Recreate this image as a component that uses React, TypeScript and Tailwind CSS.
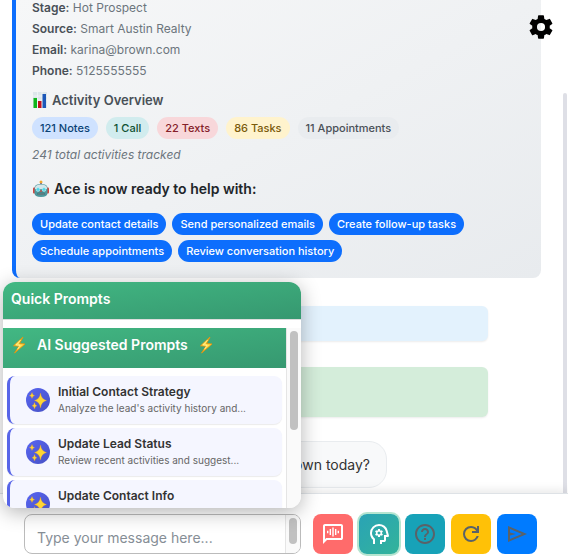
import React from 'react';
import { IoSettingsSharp } from 'react-icons/io5';
import { MdHelpOutline } from 'react-icons/md';

const details = [
  { label: 'Stage', value: 'Hot Prospect' },
  { label: 'Source', value: 'Smart Austin Realty' },
  { label: 'Email', value: 'karina@brown.com' },
  { label: 'Phone', value: '5125555555' },
];

const activities = [
  { text: '121 Notes', color: 'bg-[#cfe2ff] text-[#0a4275]' },
  { text: '1 Call', color: 'bg-[#d1ecee] text-[#0f5132]' },
  { text: '22 Texts', color: 'bg-[#f8d7da] text-[#842029]' },
  { text: '86 Tasks', color: 'bg-[#fff3cd] text-[#7a5a0a]' },
  { text: '11 Appointments', color: 'bg-[#e9ecef] text-[#495057]' },
];

const abilities = [
  'Update contact details',
  'Send personalized emails',
  'Create follow-up tasks',
  'Schedule appointments',
  'Review conversation history',
];

const prompts = [
  { title: 'Initial Contact Strategy', text: "Analyze the lead's activity history and..." },
  { title: 'Update Lead Status', text: 'Review recent activities and suggest...' },
  { title: 'Update Contact Info', text: '' },
];

function ChartIcon() {
  return (
    <svg viewBox="0 0 16 16" className="w-4 h-4 shrink-0" aria-hidden="true">
      <rect x="1" width="14" height="16" fill="#dde6ea" />
      <path d="M1 4h14M1 8h14M1 12h14M5.5 0v16M10 0v16" stroke="#f6fafb" strokeWidth="0.6" />
      <rect x="1.500" y="6" width="3.500" height="10" fill="#10b51c" />
      <rect x="6" y="9" width="3.500" height="7" fill="#c4121f" />
      <rect x="10.500" y="2" width="3.500" height="14" fill="#1c57b8" />
    </svg>
  );
}

function RobotIcon() {
  return (
    <svg viewBox="0 0 18 18" className="w-[18px] h-[18px] shrink-0" aria-hidden="true">
      <rect x="1" y="7.500" width="3" height="6" rx="1" fill="#d3453d" />
      <rect x="14" y="7.500" width="3" height="6" rx="1" fill="#d3453d" />
      <path d="M8 2.500h2V5H8z" fill="#5a5fb8" />
      <circle cx="9" cy="2" r="1.500" fill="#f0a92e" />
      <path d="M2.500 8q0-4 6.500-4t6.500 4v5q0 4-6.500 4t-6.500-4z" fill="#4d979c" />
      <path d="M3 8q0-3.500 6-3.500T15 8v1H3z" fill="#d5e6e9" />
      <circle cx="6" cy="9.500" r="1.900" fill="#4fd6e6" stroke="#d2eff2" strokeWidth="0.6" />
      <circle cx="12" cy="9.500" r="1.900" fill="#4fd6e6" stroke="#d2eff2" strokeWidth="0.6" />
      <path d="M9 9.500l1.200 2.200H7.800z" fill="#d3453d" />
      <rect x="5.500" y="12.800" width="7" height="2.200" rx="1" fill="#35585c" />
      <path d="M7 13v2M9 13v2M11 13v2" stroke="#b9d4d6" strokeWidth="0.6" />
    </svg>
  );
}

function BoltIcon() {
  return (
    <svg viewBox="0 0 16 18" className="w-4 h-[18px] shrink-0" aria-hidden="true">
      <path
        d="M12 1L2.500 9.800l5.500.4L3.500 17 14 8l-5.500-.4z"
        fill="#ffe04f"
        stroke="#e8930c"
        strokeWidth="0.9"
        strokeLinejoin="round"
      />
      <path d="M9.500 4L5 8.800l4 .5L6.500 13" fill="none" stroke="#fff3a6" strokeWidth="0.7" />
    </svg>
  );
}

function SparklesIcon() {
  return (
    <svg viewBox="0 0 24 24" className="w-6 h-6" fill="#ffd633" stroke="#f0a020" strokeWidth="0.3" aria-hidden="true">
      <path d="M14.500 5q.8 6.400 6 7.500-5.200 1.100-6 7.500-.8-6.400-6-7.500 5.200-1.100 6-7.500z" />
      <path d="M6 4.500q.4 2.600 2.600 3Q6.400 8 6 10.500 5.600 8 3.400 7.500q2.200-.4 2.600-3z" />
      <path d="M8.500 14.500q.4 2.800 2.500 3.200-2.100.4-2.500 3.200-.4-2.800-2.500-3.200 2.100-.4 2.500-3.200z" />
    </svg>
  );
}

function VoiceChatIcon() {
  return (
    <svg viewBox="0 -960 960 960" className="w-6 h-6" fill="currentColor" aria-hidden="true">
      <path d="M80-80v-720q0-33 23.500-56.500T160-880h640q33 0 56.500 23.500T880-800v480q0 33-23.500 56.500T800-240H240L80-80Zm126-240h594v-480H160v525l46-45Z" />
      <path d="M240-610h55v100h-55zM345-680h55v240h-55zM452-740h56v360h-56zM560-680h55v240h-55zM665-610h55v100h-55z" />
    </svg>
  );
}

function HeadIcon() {
  return (
    <svg viewBox="0 -960 960 960" className="w-6 h-6" fill="currentColor" aria-hidden="true">
      <path d="M240-80v-172q-57-52-88.500-121.500T120-520q0-150 105-255t255-105q125 0 221.500 73.500T827-615l52 205q5 19-7 34.500T840-360h-80v120q0 33-23.500 56.500T680-160h-80v80h-80v-160h160v-200h108l-38-155q-23-91-98-148t-172-57q-116 0-198 81t-82 197q0 60 24.500 114t69.500 96l26 24v208h-80Z" />
      <path d="M440-360h80l6-50q8-3 14.500-7t11.500-9l46 20 40-68-40-30q2-8 2-16t-2-16l40-30-40-68-46 20q-5-5-11.500-9t-14.500-7l-6-50h-80l-6 50q-8 3-14.500 7t-11.500 9l-46-20-40 68 40 30q-2 8-2 16t2 16l-40 30 40 68 46-20q5 5 11.500 9t14.500 7l6 50Zm40-100q-25 0-42.500-17.500T420-520q0-25 17.500-42.500T480-580q25 0 42.500 17.500T540-520q0 25-17.500 42.500T480-460Z" />
    </svg>
  );
}

function RefreshIcon() {
  return (
    <svg viewBox="0 -960 960 960" className="w-6 h-6" fill="currentColor" aria-hidden="true">
      <path d="M480-160q-134 0-227-93t-93-227q0-134 93-227t227-93q69 0 132 28.500T720-690v-110h80v280H520v-80h168q-32-56-87.500-88T480-720q-100 0-170 70t-70 170q0 100 70 170t170 70q77 0 139-44t87-116h84q-28 106-114 173t-196 67Z" />
    </svg>
  );
}

function SendIcon() {
  return (
    <svg viewBox="0 -960 960 960" className="w-6 h-6" fill="currentColor" aria-hidden="true">
      <path d="M120-160v-640l760 320-760 320Zm80-120 474-200-474-200v140l240 60-240 60v140Z" />
    </svg>
  );
}

function ContactCard() {
  return (
    <section className="mr-[22px] px-4 pb-4 rounded-b-lg border-l-4 border-[#0d6efd] bg-linear-to-br from-[#f6f7f8] to-[#e8ebee]">
      <div className="space-y-[5px] text-xs leading-4 text-[#6c757d]">
        {details.map(item => (
          <p key={item.label}>
            <strong className="font-semibold text-[#495057]">{item.label}:</strong> {item.value}
          </p>
        ))}
      </div>

      <h3 className="mt-[13px] flex items-center gap-1 text-[13px] leading-4 font-semibold text-[#495057]">
        <ChartIcon />
        Activity Overview
      </h3>
      <div className="mt-[9px] flex flex-wrap gap-2">
        {activities.map(item => (
          <span
            key={item.text}
            className={`px-2 rounded-full text-[11px] leading-[22px] font-medium ${item.color}`}
          >
            {item.text}
          </span>
        ))}
      </div>
      <p className="mt-2 text-xs leading-4 italic text-[#6c757d]">241 total activities tracked</p>

      <h3 className="mt-4 flex items-center gap-1 text-sm leading-5 font-semibold text-[#212529]">
        <RobotIcon />
        Ace is now ready to help with:
      </h3>
      <div className="mt-[14px] flex flex-wrap gap-x-[6px] gap-y-[5px]">
        {abilities.map(text => (
          <span
            key={text}
            className="px-2 rounded-xl bg-[#0d6efd] text-[11px] leading-[22px] font-medium text-white"
          >
            {text}
          </span>
        ))}
      </div>
    </section>
  );
}

function QuickPrompts() {
  return (
    <aside className="absolute left-[3px] bottom-12 z-10 w-[298px] h-[226px] flex flex-col rounded-xl overflow-hidden bg-white shadow-[0_4px_20px_rgba(0,0,0,0.3)]">
      <h2 className="shrink-0 px-2 pb-[3px] border-b border-[#dddddd] bg-linear-to-br from-[#42b883] to-[#369870] text-sm leading-[34px] font-semibold text-white">
        Quick Prompts
      </h2>
      <div className="mt-2 flex flex-1 min-h-0">
        <div className="flex-1 min-w-0 overflow-hidden">
          <h3 className="h-10 px-2 pb-[6px] flex items-center gap-[10px] bg-linear-to-br from-[#42b883] to-[#369870] text-sm font-semibold text-white">
            <BoltIcon />
            AI Suggested Prompts
            <BoltIcon />
          </h3>
          <div className="px-1 pt-2 space-y-1">
            {prompts.map(prompt => (
              <button
                key={prompt.title}
                type="button"
                className="w-full h-12 pl-4 pr-2 flex items-center gap-2 rounded-lg border-l-3 border-[#5865e8] bg-[#f5f6ff] text-left shadow-[0_1px_1px_rgba(0,0,0,0.08)]"
              >
                <span className="shrink-0 rounded-full bg-linear-to-br from-[#5865f2] to-[#4752c4]">
                  <SparklesIcon />
                </span>
                <span className="min-w-0">
                  <span className="block text-xs leading-4 font-semibold text-[#333333]">{prompt.title}</span>
                  <span className="block h-4 text-[10px] leading-4 text-[#666666] truncate">{prompt.text}</span>
                </span>
              </button>
            ))}
          </div>
        </div>
        <div className="w-[15px] px-[3px] pt-[3px] border-l border-[#e5e5e5] bg-[#fafafa]">
          <div className="w-2 h-[99px] rounded-full bg-[#c1c1c1]" />
        </div>
      </div>
    </aside>
  );
}

function Composer() {
  return (
    <footer className="relative shrink-0 pl-6 pr-[31px] pt-5 pb-[2px] flex gap-3 border-t border-[#dee2e6] bg-white shadow-[0_-2px_10px_rgba(0,0,0,0.1)]">
      <div className="flex-1 min-w-0 h-10 flex rounded-lg border border-[#bbbbbb] overflow-hidden">
        <textarea
          aria-label="Message"
          placeholder="Type your message here..."
          className="flex-1 min-w-0 h-full px-3 pt-[13px] resize-none overflow-hidden outline-none text-sm leading-5 placeholder:text-[#868e96]"
        />
        <div className="w-[15px] px-[3px] pt-[3px] border-l border-[#e5e5e5] bg-[#fafafa]">
          <div className="w-2 h-[26px] rounded-full bg-[#c1c1c1]" />
        </div>
      </div>
      <div className="flex gap-[6px] text-[#5a6268]">
        <button type="button" aria-label="Voice message" className="w-10 h-10 flex items-center justify-center rounded-lg bg-[#ff6b6b] text-white">
          <VoiceChatIcon />
        </button>
        <button
          type="button"
          aria-label="Quick prompts"
          className="w-10 h-10 flex items-center justify-center rounded-lg bg-linear-to-br from-[#2aa3b5] to-[#34b39a] text-white ring-2 ring-[#b5e5d0]"
        >
          <HeadIcon />
        </button>
        <button type="button" aria-label="Help" className="w-10 h-10 flex items-center justify-center rounded-lg bg-[#17a2b8]">
          <MdHelpOutline className="w-6 h-6" />
        </button>
        <button type="button" aria-label="Restart" className="w-10 h-10 flex items-center justify-center rounded-lg bg-[#ffc107]">
          <RefreshIcon />
        </button>
        <button type="button" aria-label="Send" className="w-10 h-10 flex items-center justify-center rounded-lg bg-[#007bff]">
          <SendIcon />
        </button>
      </div>
    </footer>
  );
}

function App() {
  return (
    <div className="relative h-screen flex flex-col overflow-hidden bg-white font-['Inter',sans-serif]">
      <button type="button" aria-label="Settings" className="absolute top-[14px] right-[14px] z-10 text-black">
        <IoSettingsSharp className="w-[26px] h-[26px]" />
      </button>

      <main className="flex-1 min-h-0 flex overflow-hidden">
        <div className="flex-1 min-w-0 pl-3">
          <ContactCard />
          <div className="mt-7 mr-[75px] h-[35px] rounded-md bg-[#e3f2fd] shadow-[0_1px_2px_rgba(0,0,0,0.08)]" />
          <div className="mt-[26px] mr-[75px] h-[50px] rounded-md bg-[#d4edda] shadow-[0_1px_2px_rgba(0,0,0,0.08)]" />
          <p className="mt-6 w-[375px] px-4 py-3 rounded-[18px] border border-[#e9ecef] bg-[#f8f9fa] text-right text-sm leading-[21px] text-[#333333]">
            down today?
          </p>
        </div>
        <div className="w-1 mr-px mt-[93px] shrink-0 rounded-t-full bg-[#dedfe6]" />
      </main>

      <Composer />
      <QuickPrompts />
    </div>
  );
}

export default App;
